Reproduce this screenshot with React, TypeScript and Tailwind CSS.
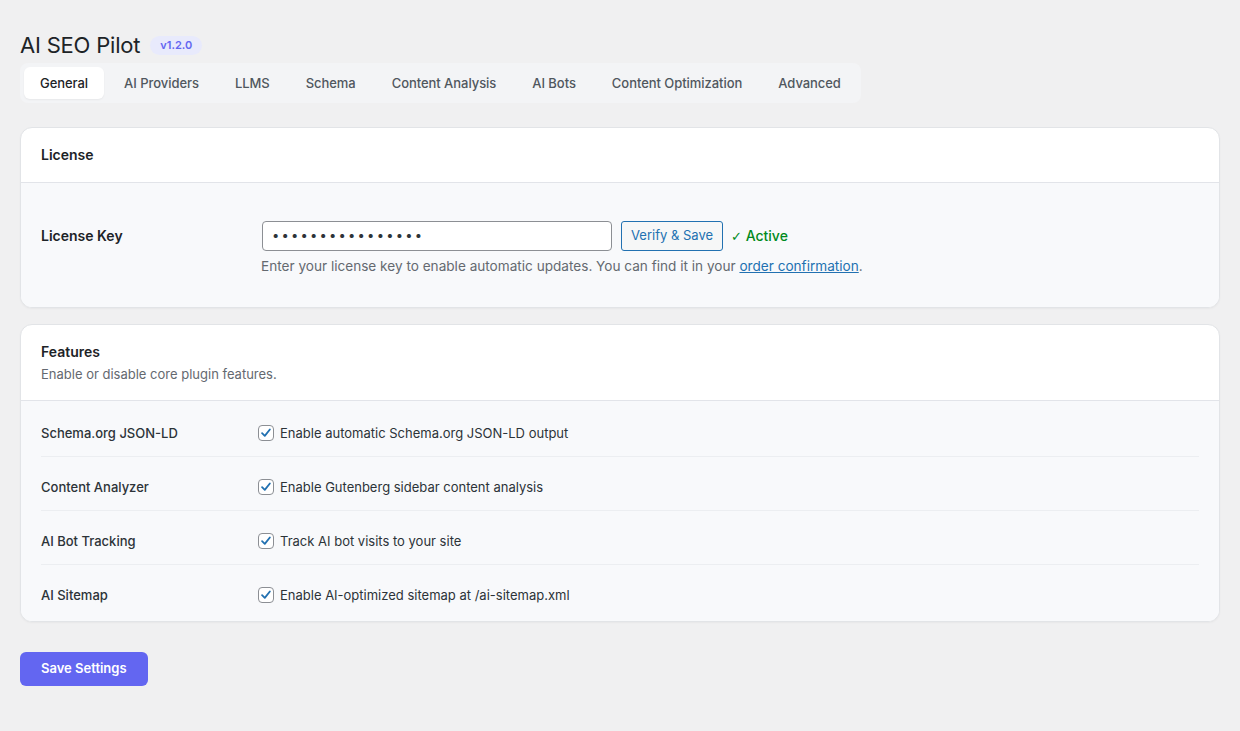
import React from "react";

const tabs = [
  "General",
  "AI Providers",
  "LLMS",
  "Schema",
  "Content Analysis",
  "AI Bots",
  "Content Optimization",
  "Advanced",
];

const features = [
  { label: "Schema.org JSON-LD", text: "Enable automatic Schema.org JSON-LD output" },
  { label: "Content Analyzer", text: "Enable Gutenberg sidebar content analysis" },
  { label: "AI Bot Tracking", text: "Track AI bot visits to your site" },
  { label: "AI Sitemap", text: "Enable AI-optimized sitemap at /ai-sitemap.xml" },
];

function CheckBox() {
  return (
    <span className="flex h-4 w-4 shrink-0 items-center justify-center rounded-[4px] border border-[#8c8f94] bg-white">
      <svg viewBox="0 0 16 16" className="h-[14px] w-[14px]">
        <path d="M3.5 8.2 L6.6 11.2 L12.4 4" fill="none" stroke="#2271b1" strokeWidth="2.1" strokeLinecap="round" strokeLinejoin="round" />
      </svg>
    </span>
  );
}

export default function App() {
  return (
    <div className="min-h-[731px] bg-[#f0f0f1] px-5 pt-[31px] font-['Inter','Noto_Sans',sans-serif] text-[#1d2327]">
      <div className="flex items-center gap-[10px]">
        <h1 className="text-[22px] leading-[28px] font-normal tracking-[-0.2px] text-[#1d2327]">AI SEO Pilot</h1>
        <span className="rounded-full bg-[#e8eafc] px-[10px] py-[3px] text-[11px] leading-[13px] font-semibold text-[#6366f1]">v1.2.0</span>
      </div>

      <div className="mt-[4px] inline-flex gap-1 rounded-lg bg-[#f3f4f6] p-1">
        {tabs.map((t, i) => (
          <div
            key={t}
            className={
              i === 0
                ? "rounded-md bg-white px-4 py-[7px] text-[13px] leading-[18px] font-medium tracking-[-0.05px] text-[#1d2327] shadow-[0_1px_2px_rgba(0,0,0,0.05)]"
                : "rounded-md px-4 py-[7px] text-[13px] leading-[18px] font-medium tracking-[-0.05px] text-[#50575e]"
            }
          >
            {t}
          </div>
        ))}
      </div>

      <div className="mt-[24px] overflow-hidden rounded-xl border border-[#e2e4e7] bg-white shadow-[0_1px_2px_rgba(0,0,0,0.04)]">
        <div className="border-b border-[#e2e4e9] px-5 py-[17px]">
          <h2 className="text-[14px] leading-[20px] font-semibold">License</h2>
        </div>
        <div className="flex bg-[#f8f9fb] px-5 pt-[38px] pb-[31px]">
          <div className="w-[221px] shrink-0 pt-[5px] text-[14px] leading-[20px] font-semibold">License Key</div>
          <div className="flex flex-col">
            <div className="flex items-center">
              <div className="flex h-[30px] w-[350px] items-center rounded-[4px] border border-[#8c8f94] bg-white px-[9px] text-[13px] tracking-[2.2px] text-[#2c3338]">
                ••••••••••••••••
              </div>
              <button className="ml-[9px] h-[30px] rounded-[3px] border border-[#2271b1] bg-[#f6f7f7] px-[9px] text-[13px] text-[#2271b1]">
                Verify &amp; Save
              </button>
              <span className="ml-[8px] text-[14px] font-medium text-[#008a20]">
                <span className="font-['DejaVu_Sans',sans-serif] text-[13px] font-normal">✓</span> Active
              </span>
            </div>
            <p className="mt-[5px] -ml-px text-[13.6px] leading-[20px] text-[#646970]">
              Enter your license key to enable automatic updates. You can find it in your{" "}
              <a className="text-[#2271b1] underline">order confirmation</a>.
            </p>
          </div>
        </div>
      </div>

      <div className="mt-[16px] overflow-hidden rounded-xl border border-[#e2e4e7] bg-white shadow-[0_1px_2px_rgba(0,0,0,0.04)]">
        <div className="border-b border-[#e2e4e9] px-5 pt-[17px] pb-[16px]">
          <h2 className="text-[14px] leading-[20px] font-semibold">Features</h2>
          <p className="mt-[2px] text-[13px] leading-[20px] text-[#646970]">Enable or disable core plugin features.</p>
        </div>
        <div className="bg-[#f8f9fb] px-5 pt-[2px] pb-[2px]">
          {features.map((f, i) => (
            <div
              key={f.label}
              className={
                "flex items-center pt-[19px] pb-[12px] " +
                (i < features.length - 1 ? "border-b border-[#eceef1]" : "pb-[13px]")
              }
            >
              <div className="w-[217px] shrink-0 text-[13px] leading-[22px] font-medium text-[#2c3338]">{f.label}</div>
              <CheckBox />
              <span className="ml-[6px] text-[13px] leading-[22px] text-[#2c3338]">{f.text}</span>
            </div>
          ))}
        </div>
      </div>

      <button className="mt-[30px] h-[34px] rounded-md bg-[#6366f1] px-[21px] text-[13px] font-semibold text-white">
        Save Settings
      </button>
    </div>
  );
}
